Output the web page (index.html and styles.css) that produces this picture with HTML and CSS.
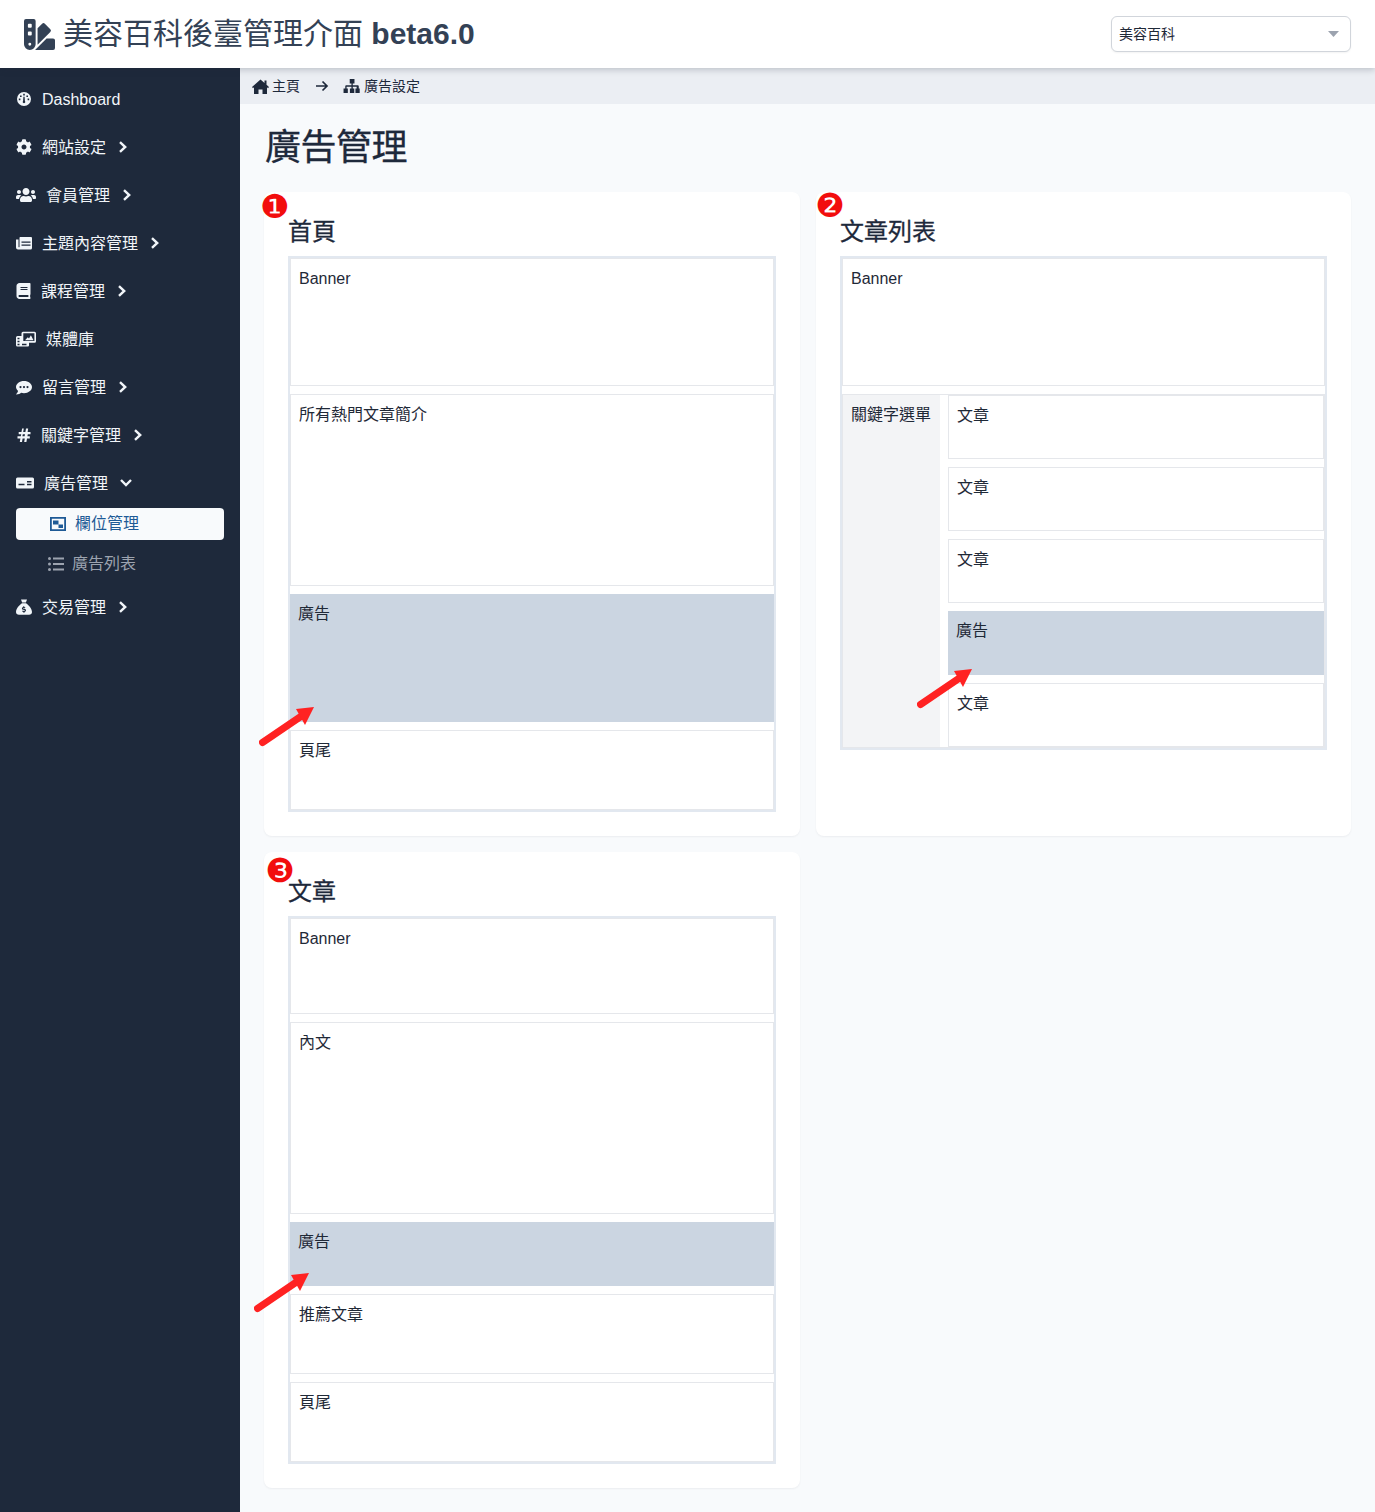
FILE: index.html
```html
<!DOCTYPE html>
<html lang="zh-Hant">
<head>
<meta charset="utf-8">
<title>美容百科後臺管理介面</title>
<link rel="stylesheet" href="styles.css">
</head>
<body>
<header class="topbar">
  <div class="brand">
    <svg class="logo" viewBox="0 0 512 512"><path d="M434.66,167.71h0L344.5,77.36a31.83,31.83,0,0,0-45-.07h0l-.07.07L224,152.88V424L434.66,212.9A32,32,0,0,0,434.66,167.71ZM480,320H373.09L186.68,506.51c-1.67,1.67-3.47,3-5.19,4.49H480a32,32,0,0,0,32-32V352A32,32,0,0,0,480,320ZM192,32A32,32,0,0,0,160,0H32A32,32,0,0,0,0,32V416a96,96,0,0,0,192,0ZM96,440a24,24,0,1,1,24-24A24,24,0,0,1,96,440Zm32-184a16,16,0,0,1-16,16H80a16,16,0,0,1-16-16V224a16,16,0,0,1,16-16h32a16,16,0,0,1,16,16Zm0-128a16,16,0,0,1-16,16H80a16,16,0,0,1-16-16V96A16,16,0,0,1,80,80h32a16,16,0,0,1,16,16Z"/></svg>
    <h1 class="brand-title">美容百科後臺管理介面 <b>beta6.0</b></h1>
  </div>
  <div class="site-select"><span>美容百科</span><svg class="caret" viewBox="0 0 11 6"><path d="M0 0h11L5.500 6z"/></svg></div>
</header>
<div class="layout">
  <nav class="sidebar">
    <ul class="menu">
      <li class="item"><svg class="ic w16" viewBox="0 0 16 16"><path fill-rule="evenodd" d="M8 1a7 7 0 1 1 0 14A7 7 0 0 1 8 1zM7.200 2.800v1.600h1.600V2.800zM4 4.400v1.600h1.600V4.400zM10.400 4.400v1.600H12V4.400zM2.800 7.600v1.600h1.600V7.600zM11.600 7.600v1.600h1.600V7.600zM7.400 5.800 7.100 10a1.300 1.300 0 1 0 1.800 0L8.600 5.800z"/></svg><span>Dashboard</span></li>
      <li class="item"><svg class="ic w16" viewBox="0 0 512 512"><path d="M487.4 315.7l-42.6-24.6c4.3-23.2 4.3-47 0-70.2l42.6-24.6c4.9-2.8 7.1-8.6 5.500-14-11.100-35.600-30-67.800-54.700-94.600-3.800-4.100-10-5.100-14.800-2.300L380.800 110c-17.900-15.400-38.500-27.300-60.800-35.100V25.800c0-5.600-3.900-10.500-9.400-11.700-36.700-8.200-74.300-7.800-109.200 0-5.500 1.200-9.400 6.100-9.400 11.700V75c-22.200 7.900-42.800 19.800-60.800 35.100L88.700 85.500c-4.900-2.800-11-1.900-14.800 2.300-24.700 26.700-43.600 58.900-54.700 94.600-1.700 5.400.6 11.200 5.500 14L67.300 221c-4.300 23.200-4.300 47 0 70.200l-42.600 24.600c-4.900 2.800-7.100 8.600-5.500 14 11.100 35.600 30 67.800 54.700 94.600 3.800 4.100 10 5.100 14.800 2.300l42.600-24.600c17.900 15.400 38.500 27.300 60.800 35.100v49.200c0 5.600 3.900 10.500 9.400 11.700 36.700 8.200 74.300 7.800 109.200 0 5.500-1.200 9.400-6.100 9.400-11.700v-49.200c22.200-7.900 42.800-19.800 60.800-35.100l42.600 24.600c4.900 2.800 11 1.900 14.800-2.300 24.700-26.700 43.600-58.900 54.700-94.600 1.500-5.500-.7-11.300-5.600-14.100zM256 336c-44.100 0-80-35.900-80-80s35.900-80 80-80 80 35.900 80 80-35.900 80-80 80z"/></svg><span>網站設定</span><svg class="chev" viewBox="0 0 10 12"><path d="M2 1.200 7.200 6 2 10.800"/></svg></li>
      <li class="item"><svg class="ic w20" viewBox="0 0 640 512"><path d="M96 224c35.300 0 64-28.700 64-64s-28.700-64-64-64-64 28.700-64 64 28.700 64 64 64zm448 0c35.300 0 64-28.700 64-64s-28.700-64-64-64-64 28.700-64 64 28.700 64 64 64zm32 32h-64c-17.600 0-33.500 7.100-45.100 18.600 40.300 22.100 68.900 62 75.100 109.400h66c17.700 0 32-14.300 32-32v-32c0-35.300-28.700-64-64-64zm-256 0c61.900 0 112-50.100 112-112S381.900 32 320 32 208 82.100 208 144s50.100 112 112 112zm76.800 32h-8.300c-20.800 10-43.900 16-68.500 16s-47.600-6-68.500-16h-8.300C179.600 288 128 339.600 128 403.200V432c0 26.500 21.500 48 48 48h288c26.500 0 48-21.500 48-48v-28.800c0-63.600-51.600-115.200-115.200-115.200zm-223.700-13.400C161.500 263.100 145.600 256 128 256H64c-35.300 0-64 28.700-64 64v32c0 17.700 14.300 32 32 32h65.900c6.300-47.400 34.900-87.300 75.200-109.400z"/></svg><span>會員管理</span><svg class="chev" viewBox="0 0 10 12"><path d="M2 1.200 7.200 6 2 10.800"/></svg></li>
      <li class="item"><svg class="ic w16" viewBox="0 0 16 16"><path fill-rule="evenodd" d="M4 2h11a1 1 0 0 1 1 1v10a1.500 1.500 0 0 1-1.500 1.500H2A2 2 0 0 1 0 12.500V4.500h2.500V12a.7.7 0 0 0 1 0V3a1 1 0 0 1 .5-1zM5.500 6.500v1.300h9V6.500zM5.500 9.500v1.300h9V9.500z"/></svg><span>主題內容管理</span><svg class="chev" viewBox="0 0 10 12"><path d="M2 1.200 7.200 6 2 10.800"/></svg></li>
      <li class="item"><svg class="ic w15" viewBox="0 0 448 512"><path d="M448 360V24c0-13.300-10.700-24-24-24H96C43 0 0 43 0 96v320c0 53 43 96 96 96h328c13.300 0 24-10.700 24-24v-16c0-7.500-3.500-14.300-8.900-18.700-4.200-15.400-4.200-59.300 0-74.700 5.400-4.300 8.900-11.100 8.900-18.600zM128 134c0-3.300 2.700-6 6-6h212c3.300 0 6 2.700 6 6v20c0 3.300-2.700 6-6 6H134c-3.300 0-6-2.700-6-6v-20zm0 64c0-3.300 2.700-6 6-6h212c3.300 0 6 2.700 6 6v20c0 3.300-2.700 6-6 6H134c-3.300 0-6-2.700-6-6v-20zm253.400 250H96c-17.700 0-32-14.300-32-32 0-17.600 14.400-32 32-32h285.400c-1.900 17.100-1.900 46.900 0 64z"/></svg><span>課程管理</span><svg class="chev" viewBox="0 0 10 12"><path d="M2 1.200 7.200 6 2 10.800"/></svg></li>
      <li class="item"><svg class="ic w20" viewBox="0 0 20 16"><path fill-rule="evenodd" d="M7 .7h11.500A1.500 1.500 0 0 1 20 2.200v8a1.500 1.500 0 0 1-1.500 1.500H13v2.800a1 1 0 0 1-1 1H1.500a1.500 1.500 0 0 1-1.500-1.500V6.500A1.500 1.500 0 0 1 1.500 5h4V2.200A1.500 1.500 0 0 1 7 .7zM7.300 2.300v7.800h11.100V2.300zM9 9.200l2.800-3 1.200 1.200 1.900-3.100 2.600 4.900zM1.500 6.800v1.500h2V6.800zM1.500 9.800v1.500h2V9.800zM1.500 12.800v1.500h2v-1.500zM6 12.800v1.500h4.500v-1.500z"/></svg><span>媒體庫</span></li>
      <li class="item"><svg class="ic w16" viewBox="0 0 16 16"><path fill-rule="evenodd" d="M8 2c4.400 0 8 2.700 8 6.100s-3.600 6.100-8 6.100c-1 0-2-.2-2.900-.4C4 14.700 2.400 15.500.4 15.500c-.3 0-.4-.3-.2-.5.700-.7 1.600-1.900 1.900-3C.8 10.900 0 9.600 0 8.100 0 4.700 3.600 2 8 2zM4.500 7a1.100 1.100 0 1 0 0 2.200 1.100 1.100 0 0 0 0-2.200zM8 7a1.100 1.100 0 1 0 0 2.200A1.100 1.100 0 0 0 8 7zM11.500 7a1.100 1.100 0 1 0 0 2.200 1.100 1.100 0 0 0 0-2.200z"/></svg><span>留言管理</span><svg class="chev" viewBox="0 0 10 12"><path d="M2 1.200 7.200 6 2 10.800"/></svg></li>
      <li class="item"><svg class="ic w15" viewBox="0 0 14 16"><path d="M5.600 1.500 5 5H2.200v2.200h2.500L4.300 9.300H1v2.200h2.900L3.300 15h2.200l.6-3.500h2.200L7.700 15h2.200l.6-3.500h2.800V9.300h-2.400l.4-2.100H14V5h-2.900l.6-3.500H9.500L8.900 5H6.700l.6-3.500zM6.300 7.200h2.200l-.4 2.100H5.900z"/></svg><span>關鍵字管理</span><svg class="chev" viewBox="0 0 10 12"><path d="M2 1.200 7.200 6 2 10.800"/></svg></li>
      <li class="item"><svg class="ic w18" viewBox="0 0 18 16"><path fill-rule="evenodd" d="M1.500 2.500h15A1.500 1.500 0 0 1 18 4v8a1.500 1.500 0 0 1-1.500 1.500h-15A1.500 1.500 0 0 1 0 12V4a1.500 1.500 0 0 1 1.500-1.500zM2.500 8.800v1.400h6V8.800zM11 6v1.400h4.500V6zM11 8.800v1.400h4.500V8.800z"/></svg><span>廣告管理</span><svg class="chev-down" viewBox="0 0 14 10"><path d="M2 2 7 7 12 2"/></svg></li>
      <li class="sub">
        <a class="sub-item active"><svg class="sub-ic" viewBox="0 0 16 14"><path fill-rule="evenodd" d="M0 0h16v14H0zM1.800 1.800v10.400h12.400V1.800zM3 3.500h5.500v4H3zM8.500 7.500H13v3.500H8.500z"/></svg><span>欄位管理</span></a>
        <a class="sub-item"><svg class="sub-ic list" viewBox="0 0 16 14"><path d="M1.500 0a1.500 1.500 0 1 1 0 3 1.500 1.500 0 0 1 0-3zM1.500 5.500a1.500 1.500 0 1 1 0 3 1.500 1.500 0 0 1 0-3zM1.500 11a1.500 1.500 0 1 1 0 3 1.500 1.500 0 0 1 0-3zM5 .4h11v2.200H5zM5 5.900h11v2.200H5zM5 11.400h11v2.200H5z"/></svg><span>廣告列表</span></a>
      </li>
      <li class="item"><svg class="ic w16" viewBox="0 0 16 16"><path fill-rule="evenodd" d="M5 .5h6L9.900 3.500H6.100zM6 4.300h4c2.800 1.800 6 5.400 6 8.700 0 1.700-1.300 2.700-3 2.700H3c-1.700 0-3-1-3-2.700 0-3.300 3.200-6.900 6-8.700zM7.400 7v.9c-.9.200-1.500.8-1.500 1.500 0 1.700 2.900 1.100 2.900 2 0 .3-.3.500-.8.500-.4 0-.9-.1-1.300-.4l-.6.900c.4.300.8.400 1.300.5v.9h1.100v-.9c.9-.2 1.500-.8 1.500-1.600 0-1.700-2.900-1.200-2.900-2 0-.3.300-.4.700-.4.400 0 .8.100 1.100.3l.5-.9c-.3-.2-.7-.3-1.200-.4V7z"/></svg><span>交易管理</span><svg class="chev" viewBox="0 0 10 12"><path d="M2 1.200 7.200 6 2 10.800"/></svg></li>
    </ul>
  </nav>
  <main class="content">
    <div class="crumbs">
      <svg class="crumb-home" viewBox="0 0 17 15"><path d="M8.500.5 12.500 4V1.500h2v4.300L17 8l-1 1.200-1-.9V15h-4.500v-4.500h-4V15H2V8.300l-1 .9L0 8z"/></svg>
      <span>主頁</span>
      <svg class="crumb-arrow" viewBox="0 0 14 12"><path d="M1 6h11M7.500 1.500 12 6l-4.500 4.500"/></svg>
      <svg class="crumb-map" viewBox="0 0 16 14"><path d="M5.500 0h5v4.500H8.700v1.800H14a1 1 0 0 1 1 1v2.200h1V14h-4.500V9.500h1.300V7.700H8.700v1.800H10.300V14H5.700V9.500h1.600V7.700H2.200v1.800h1.300V14H-1V9.500h1.800V7.300a1 1 0 0 1 1-1h5.500V4.500H5.500z" transform="translate(.5 0) scale(.95 1)"/></svg>
      <span>廣告設定</span>
    </div>
    <div class="page">
      <h2 class="page-title">廣告管理</h2>
      <div class="cards">
        <section class="card">
          <span class="badge b1">❶</span>
          <h3 class="card-title">首頁</h3>
          <div class="box">
            <div class="slot h128">Banner</div>
            <div class="slot h192">所有熱門文章簡介</div>
            <div class="slot ad h128">廣告</div>
            <div class="slot h80">頁尾</div>
          </div>
          <svg class="pointer p1" viewBox="0 0 60 44"><path class="shaft" d="M3.500 37.500 44 10"/><path class="head" d="M55 2 37 4 46 20z"/></svg>
        </section>
        <section class="card">
          <span class="badge b2">❷</span>
          <h3 class="card-title">文章列表</h3>
          <div class="box">
            <div class="slot h128">Banner</div>
            <div class="split">
              <div class="keywords">關鍵字選單</div>
              <div class="articles">
                <div class="slot h64">文章</div>
                <div class="slot h64">文章</div>
                <div class="slot h64">文章</div>
                <div class="slot ad h64">廣告</div>
                <div class="slot h64">文章</div>
              </div>
            </div>
          </div>
          <svg class="pointer p2" viewBox="0 0 60 44"><path class="shaft" d="M3.500 37.500 44 10"/><path class="head" d="M55 2 37 4 46 20z"/></svg>
        </section>
        <section class="card">
          <span class="badge b3">❸</span>
          <h3 class="card-title">文章</h3>
          <div class="box">
            <div class="slot h96">Banner</div>
            <div class="slot h192">內文</div>
            <div class="slot ad h64">廣告</div>
            <div class="slot h80">推薦文章</div>
            <div class="slot h80">頁尾</div>
          </div>
          <svg class="pointer p3" viewBox="0 0 60 44"><path class="shaft" d="M3.500 37.500 44 10"/><path class="head" d="M55 2 37 4 46 20z"/></svg>
        </section>
      </div>
    </div>
  </main>
</div>
</body>
</html>
```
FILE: styles.css
```css
* { box-sizing: border-box; }
html, body { margin: 0; padding: 0; }
body {
  min-height: 1512px;
  display: flex;
  flex-direction: column;
  background: #f8fafc;
  color: #1f2937;
  font-family: "Liberation Sans", "Noto Sans CJK TC", sans-serif;
  font-size: 16px;
  line-height: 24px;
}
h1, h2, h3, ul { margin: 0; padding: 0; }
ul { list-style: none; }

.topbar {
  position: relative;
  z-index: 2;
  height: 68px;
  flex: none;
  background: #fff;
  box-shadow: 0 2px 6px rgba(30, 41, 59, .22);
  display: flex;
  align-items: center;
  justify-content: space-between;
  padding: 0 24px;
}
.brand { display: flex; align-items: center; gap: 8px; }
.logo { width: 31px; height: 31px; fill: #334155; }
.brand-title { font-size: 30px; line-height: 36px; font-weight: 400; color: #334155; white-space: nowrap; }
.brand-title b { font-weight: 700; }
.site-select {
  width: 240px;
  height: 36px;
  border: 1px solid #d1d5db;
  border-radius: 6px;
  padding: 0 11px 0 7px;
  background: #fff;
  display: flex;
  align-items: center;
  justify-content: space-between;
  font-size: 14px;
  color: #1f2937;
  box-shadow: 0 1px 2px rgba(0, 0, 0, .05);
}
.caret { width: 11px; height: 6px; fill: #9ca3af; }

.layout { flex: 1; display: flex; }
.sidebar { width: 240px; flex: none; background: #1e293b; padding-top: 7px; }
.item {
  height: 48px;
  padding-left: 16px;
  display: flex;
  align-items: center;
  color: #f1f5f9;
}
.item span { padding-top: 2px; }
.ic { height: 16px; fill: #f1f5f9; flex: none; margin-right: 10px; }
.w15 { width: 15px; }
.w16 { width: 16px; }
.w18 { width: 18px; }
.w20 { width: 20px; }
.chev { width: 10px; height: 12px; margin-left: 12px; fill: none; stroke: #f1f5f9; stroke-width: 2.4; }
.chev-down { width: 14px; height: 10px; margin-left: 11px; fill: none; stroke: #f1f5f9; stroke-width: 2.4; }
.sub { padding: 1px 16px 3px; display: flex; flex-direction: column; gap: 8px; }
.sub-item {
  height: 32px;
  border-radius: 4px;
  display: flex;
  align-items: center;
  padding-left: 32px;
  color: #9ca3af;
}
.sub-item.active { background: #f8fafc; color: #1e5a96; padding-left: 34px; }
.sub-ic { width: 16px; height: 14px; fill: currentColor; margin-right: 9px; flex: none; }
.sub-ic.list { margin-right: 8px; }

.content { flex: 1; min-width: 0; }
.crumbs {
  height: 36px;
  background: #ebeef3;
  display: flex;
  align-items: center;
  padding-left: 12px;
  font-size: 14px;
  color: #1e293b;
}
.crumb-home { width: 17px; height: 15px; fill: #1e293b; margin-right: 3px; }
.crumb-arrow { width: 14px; height: 12px; margin: 0 15px 0 15px; fill: none; stroke: #1e293b; stroke-width: 1.7; }
.crumb-map { width: 16px; height: 14px; fill: #1e293b; margin-right: 4px; overflow: visible; }

.page { padding: 22px 24px 24px; }
.page-title { font-size: 36px; line-height: 44px; font-weight: 400; letter-spacing: -.5px; color: #1e293b; margin: 0 0 22px 1px; -webkit-text-stroke: .3px #1e293b; }
.cards { display: grid; grid-template-columns: 536px 535px; gap: 16px; align-items: stretch; }
.card {
  position: relative;
  background: #fff;
  border-radius: 8px;
  padding: 24px;
  box-shadow: 0 1px 2px rgba(30, 41, 59, .06);
}
.card-title { font-size: 24px; line-height: 32px; height: 40px; font-weight: 400; color: #1e293b; -webkit-text-stroke: .3px #1e293b; }
.box { border: 2px solid #e2e8f0; display: flex; flex-direction: column; gap: 8px; }
.slot { border: 1px solid #e5e7eb; padding: 8px; }
.slot.ad { background: #cbd5e1; border: 0; }
.h64 { height: 64px; }
.h80 { height: 80px; }
.h96 { height: 96px; }
.h128 { height: 128px; }
.h192 { height: 192px; }
.split { display: flex; gap: 8px; align-items: stretch; border: 1px solid #e5e7eb; }
.keywords { width: 97px; background: #f3f4f6; padding: 8px; flex: none; white-space: nowrap; }
.articles { flex: 1; display: flex; flex-direction: column; gap: 8px; }
.badge {
  position: absolute;
  width: 26px;
  height: 26px;
  display: flex;
  align-items: center;
  justify-content: center;
  font-family: "DejaVu Sans", sans-serif;
  font-size: 33px;
  line-height: 26px;
  color: #f20d0d;
}
.b1 { left: -2px; top: 2px; }
.b2 { left: 1px; top: 1px; }
.b3 { left: 3px; top: 6px; }
.pointer { position: absolute; width: 60px; height: 44px; }
.p1 { left: -5px; top: 513px; }
.p2 { left: 101px; top: 475px; }
.p3 { left: -10px; top: 419px; }
.shaft { fill: none; stroke: #ff2222; stroke-width: 7; stroke-linecap: round; }
.head { fill: #ff2222; }
```
